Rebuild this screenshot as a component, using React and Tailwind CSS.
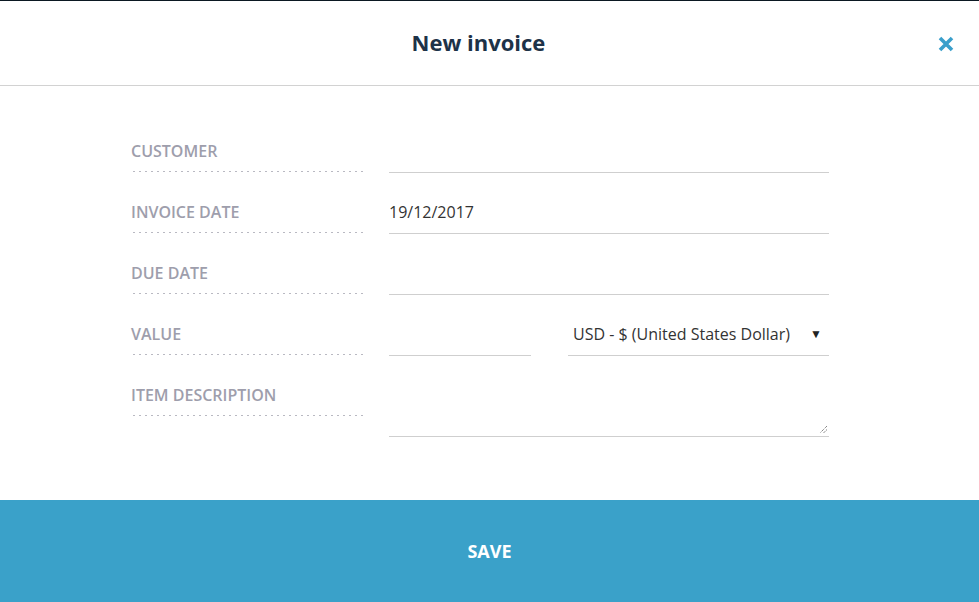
import React from "react";

const font = { fontFamily: '"Open Sans", "Liberation Sans", sans-serif' };

function Label({ children }) {
  return (
    <div className="w-[235px] shrink-0 mb-[1px] pb-[11px] text-[16px] leading-[20px] font-semibold uppercase text-[#9e9eac] bg-[linear-gradient(to_right,#b9b9c2_2px,transparent_2px)] bg-[length:6px_1px] bg-repeat-x bg-[position:2px_100%]">
      {children}
    </div>
  );
}

function Field({ className = "", children }) {
  return (
    <div className={"h-[32px] pb-[11px] border-b border-[#cfcfcf] text-[16px] leading-[20px] text-[#333]" + " " + className}>
      {children}
    </div>
  );
}

export default function App() {
  return (
    <div style={font} className="w-[979px] h-[602px] bg-white flex flex-col overflow-hidden">
      <div className="h-[86px] shrink-0 border-t border-[#0b1822] border-b border-b-[#d2d2d2] relative flex items-center justify-center pr-[22px] pb-[2px]">
        <h1 className="text-[22px] font-bold text-[#1d3248] leading-[30px]">New invoice</h1>
        <button className="absolute right-[24px] top-[34px] w-[18px] h-[18px] flex items-center justify-center">
          <svg width="18" height="18" viewBox="0 0 18 18">
            <path d="M3 3 L15 15 M15 3 L3 15" stroke="#3a9fcb" strokeWidth="3.6" strokeLinecap="butt" fill="none" />
          </svg>
        </button>
      </div>

      <div className="flex-1 pt-[55px] pl-[131px] flex flex-col gap-[29px]">
        <div className="flex items-start gap-[23px]">
          <Label>Customer</Label>
          <Field className="w-[440px]" />
        </div>
        <div className="flex items-start gap-[23px]">
          <Label>Invoice date</Label>
          <Field className="w-[440px]">19/12/2017</Field>
        </div>
        <div className="flex items-start gap-[23px]">
          <Label>Due date</Label>
          <Field className="w-[440px]" />
        </div>
        <div className="flex items-start gap-[23px]">
          <Label>Value</Label>
          <div className="w-[440px] flex gap-[37px]">
            <Field className="w-[142px]" />
            <Field className="w-[261px] flex justify-between pl-[5px] pr-[7px]">
              <span>USD - $ (United States Dollar)</span>
              <span className="text-[12px] leading-[20px] text-[#222]">▼</span>
            </Field>
          </div>
        </div>
        <div className="flex items-start gap-[23px]">
          <Label>Item description</Label>
          <div className="w-[440px] h-[52px] border-b border-[#cfcfcf] relative">
            <svg className="absolute right-[1px] bottom-[2px]" width="9" height="9" viewBox="0 0 9 9">
              <path d="M8 1 L1 8 M8 4.5 L4.5 8" stroke="#555" strokeWidth="1" strokeDasharray="1 1" fill="none" />
            </svg>
          </div>
        </div>
      </div>

      <div className="h-[102px] shrink-0 bg-[#3aa1c9] flex items-center justify-center">
        <span className="text-white text-[18px] font-bold leading-[24px]">SAVE</span>
      </div>
    </div>
  );
}
